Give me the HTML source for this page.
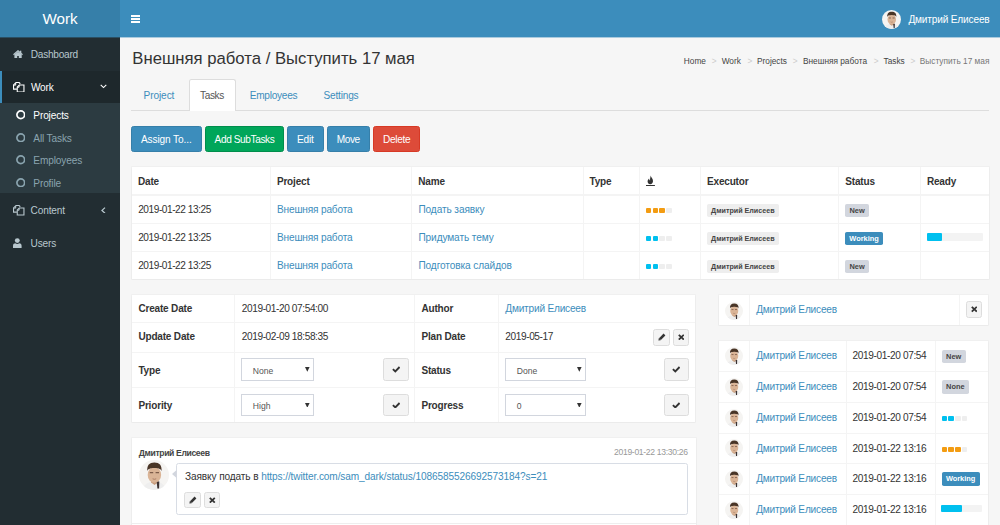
<!DOCTYPE html>
<html><head><meta charset="utf-8">
<style>
*{box-sizing:border-box;margin:0;padding:0}
html,body{width:1000px;height:525px;overflow:hidden;background:#f6f6f6;font-family:"Liberation Sans",sans-serif;color:#333}
.a{position:absolute}
.t{white-space:nowrap}
</style></head><body>
<svg width="0" height="0" style="position:absolute"><defs>
<clipPath id="avc"><circle cx="15" cy="15" r="15"/></clipPath><filter id="avb" x="-10%" y="-10%" width="120%" height="120%"><feGaussianBlur stdDeviation="0.55"/></filter>
<symbol id="av" viewBox="0 0 30 30"><g clip-path="url(#avc)">
<rect width="30" height="30" fill="#f5f4f2"/><g filter="url(#avb)">
<path d="M3 31 C4 25 8 23 11.5 22 L15.5 24.5 L19.5 22 C23 23 26 25 27 31Z" fill="#eeeeee"/>
<path d="M12 18.5 V22.5 L15.5 25 L19 22.5 V18.5Z" fill="#c79c7e"/>
<path d="M17.6 21.2 L20.3 21.6 L20.1 28.5 L18.4 28.5Z" fill="#3a3030"/>
<ellipse cx="15.4" cy="14.9" rx="6.7" ry="7.9" fill="#dab496"/>
<path d="M8.3 11 C7.9 5.2 10.4 2.7 15.4 2.6 C20.4 2.7 23 5.2 22.6 11 C21.9 9 20.4 8.1 15.4 7.9 C10.4 8.1 8.9 9 8.3 11Z" fill="#4a3427"/>
<path d="M10.8 12.6 H14.2 M16.6 12.6 H20" stroke="#7d5c4a" stroke-width="1.4"/>
<path d="M13.6 18.8 Q15.4 19.8 17.2 18.8" stroke="#a87a62" stroke-width="0.9" fill="none"/>
</g></g></symbol>
</defs></svg>
<div class="a" style="left:0.00px;top:0.00px;width:1000.00px;height:37.00px;background:#3c8dbc;"></div>
<div class="a" style="left:0.00px;top:0.00px;width:120.00px;height:37.00px;background:#367fa9;"></div>
<div class="a t" style="left:0.00px;width:120.00px;text-align:center;top:11px;font-size:15.2px;line-height:15.2px;color:#fff;">Work</div>
<div class="a" style="left:131.00px;top:15.10px;width:9.30px;height:1.70px;background:#fff;"></div>
<div class="a" style="left:131.00px;top:18.05px;width:9.30px;height:1.70px;background:#fff;"></div>
<div class="a" style="left:131.00px;top:21.00px;width:9.30px;height:1.70px;background:#fff;"></div>
<svg class="a" style="left:882px;top:9.7px" width="19" height="19" viewBox="0 0 30 30"><use href="#av"/></svg>
<div class="a t " style="left:908.40px;top:15px;font-size:10.1px;line-height:10.1px;color:#fff;letter-spacing:-0.165px;">Дмитрий Елисеев</div>
<div class="a" style="left:0.00px;top:37.00px;width:120.00px;height:488.00px;background:#222d32;"></div>
<div class="a" style="left:120.00px;top:37.00px;width:880.00px;height:1.00px;background:rgba(60,141,188,.4);"></div>
<div class="a" style="left:0.00px;top:37.00px;width:120.00px;height:1.00px;background:rgba(54,127,169,.4);"></div>
<svg class="a" style="left:13.40px;top:49.80px" width="10" height="8.4" viewBox="0 0 10 8.4"><path d="M0.5 4.7 L5 0.8 L9.5 4.7" fill="none" stroke="#b8c7ce" stroke-width="1.3"/><rect x="6.9" y="0.7" width="1.4" height="2.8" fill="#b8c7ce"/><path d="M1.4 4.6 L5 1.7 L8.7 4.6 V8.3 H5.8 V6 H4.2 V8.3 H1.4Z" fill="#b8c7ce"/></svg>
<div class="a t " style="left:30.75px;top:50px;font-size:10.1px;line-height:10.1px;color:#b8c7ce;letter-spacing:-0.24px;">Dashboard</div>
<div class="a" style="left:0.00px;top:70.50px;width:120.00px;height:32.70px;background:#1e282c;"></div>
<div class="a" style="left:0.00px;top:70.50px;width:2.25px;height:32.70px;background:#3c8dbc;"></div>
<svg class="a" style="left:13.20px;top:81.70px" width="11.5" height="10.5" viewBox="0 0 11.5 10.5"><path d="M2.9 0.55 H6.1 L7.3 1.75 M2.9 0.55 L0.55 2.9 V7.1 H3.9" fill="none" stroke="#fff" stroke-width="1.1"/><path d="M2.7 0.7 V3.1 H0.6" fill="none" stroke="#fff" stroke-width="1"/><path d="M6.3 2.95 H10.95 V9.95 H4.25 V5 Z" fill="none" stroke="#fff" stroke-width="1.1"/><path d="M6.1 3.1 V5.2 H4.3" fill="none" stroke="#fff" stroke-width="1"/></svg>
<div class="a t " style="left:31.00px;top:83px;font-size:10.1px;line-height:10.1px;color:#fff;letter-spacing:-0.22px;">Work</div>
<svg class="a" style="left:100.20px;top:84.30px" width="7" height="4.8" viewBox="0 0 7 4.8"><path d="M0.7 0.8 L3.5 3.6 L6.3 0.8" fill="none" stroke="#fff" stroke-width="1.1"/></svg>
<div class="a" style="left:0.00px;top:103.20px;width:120.00px;height:90.10px;background:#2c3b41;"></div>
<svg class="a" style="left:15.50px;top:110.30px" width="9.5" height="9.5" viewBox="0 0 9.5 9.5"><circle cx="4.75" cy="4.75" r="3.85" fill="none" stroke="#fff" stroke-width="1.7"/></svg>
<div class="a t " style="left:33.30px;top:111px;font-size:10.1px;line-height:10.1px;color:#fff;letter-spacing:-0.13px;">Projects</div>
<svg class="a" style="left:15.50px;top:132.80px" width="9.5" height="9.5" viewBox="0 0 9.5 9.5"><circle cx="4.75" cy="4.75" r="3.85" fill="none" stroke="#8aa4af" stroke-width="1.7"/></svg>
<div class="a t " style="left:33.30px;top:134px;font-size:10.1px;line-height:10.1px;color:#8aa4af;letter-spacing:-0.13px;">All Tasks</div>
<svg class="a" style="left:15.50px;top:155.30px" width="9.5" height="9.5" viewBox="0 0 9.5 9.5"><circle cx="4.75" cy="4.75" r="3.85" fill="none" stroke="#8aa4af" stroke-width="1.7"/></svg>
<div class="a t " style="left:33.30px;top:156px;font-size:10.1px;line-height:10.1px;color:#8aa4af;letter-spacing:-0.13px;">Employees</div>
<svg class="a" style="left:15.50px;top:177.80px" width="9.5" height="9.5" viewBox="0 0 9.5 9.5"><circle cx="4.75" cy="4.75" r="3.85" fill="none" stroke="#8aa4af" stroke-width="1.7"/></svg>
<div class="a t " style="left:33.30px;top:179px;font-size:10.1px;line-height:10.1px;color:#8aa4af;letter-spacing:-0.13px;">Profile</div>
<svg class="a" style="left:13.20px;top:205.00px" width="11.5" height="10.5" viewBox="0 0 11.5 10.5"><path d="M2.9 0.55 H6.1 L7.3 1.75 M2.9 0.55 L0.55 2.9 V7.1 H3.9" fill="none" stroke="#b8c7ce" stroke-width="1.1"/><path d="M2.7 0.7 V3.1 H0.6" fill="none" stroke="#b8c7ce" stroke-width="1"/><path d="M6.3 2.95 H10.95 V9.95 H4.25 V5 Z" fill="none" stroke="#b8c7ce" stroke-width="1.1"/><path d="M6.1 3.1 V5.2 H4.3" fill="none" stroke="#b8c7ce" stroke-width="1"/></svg>
<div class="a t " style="left:30.50px;top:206px;font-size:10.1px;line-height:10.1px;color:#b8c7ce;letter-spacing:-0.13px;">Content</div>
<svg class="a" style="left:100.80px;top:206.50px" width="4.8" height="6.8" viewBox="0 0 4.8 6.8"><path d="M4 0.6 L1 3.4 L4 6.2" fill="none" stroke="#b8c7ce" stroke-width="1.3"/></svg>
<svg class="a" style="left:13.10px;top:237.80px" width="8.6" height="10.2" viewBox="0 0 8.6 10.2"><circle cx="4.3" cy="2.6" r="2.45" fill="#b8c7ce"/><path d="M0 10.2 V7.8 C0 6 1.3 5.3 2.3 5.3 C2.9 5.8 3.6 6.1 4.3 6.1 C5 6.1 5.7 5.8 6.3 5.3 C7.3 5.3 8.6 6 8.6 7.8 V10.2Z" fill="#b8c7ce"/></svg>
<div class="a t " style="left:30.50px;top:239px;font-size:10.1px;line-height:10.1px;color:#b8c7ce;letter-spacing:-0.13px;">Users</div>
<div class="a t " style="left:132.30px;top:51px;font-size:16.7px;line-height:16.7px;color:#333;">Внешняя работа / Выступить 17 мая</div>
<div class="a t " style="left:683.80px;top:57px;font-size:8.3px;line-height:8.3px;color:#444;">Home</div>
<div class="a t " style="left:711.80px;top:57px;font-size:8.3px;line-height:8.3px;color:#ccc;">&gt;</div>
<div class="a t " style="left:721.70px;top:57px;font-size:8.3px;line-height:8.3px;color:#444;">Work</div>
<div class="a t " style="left:747.60px;top:57px;font-size:8.3px;line-height:8.3px;color:#ccc;">&gt;</div>
<div class="a t " style="left:757.00px;top:57px;font-size:8.3px;line-height:8.3px;color:#444;">Projects</div>
<div class="a t " style="left:792.80px;top:57px;font-size:8.3px;line-height:8.3px;color:#ccc;">&gt;</div>
<div class="a t " style="left:803.00px;top:57px;font-size:8.3px;line-height:8.3px;color:#444;">Внешняя работа</div>
<div class="a t " style="left:873.80px;top:57px;font-size:8.3px;line-height:8.3px;color:#ccc;">&gt;</div>
<div class="a t " style="left:883.50px;top:57px;font-size:8.3px;line-height:8.3px;color:#444;">Tasks</div>
<div class="a t " style="left:910.60px;top:57px;font-size:8.3px;line-height:8.3px;color:#ccc;">&gt;</div>
<div class="a t " style="left:919.80px;top:57px;font-size:8.3px;line-height:8.3px;color:#777;">Выступить 17 мая</div>
<div class="a" style="left:131.00px;top:110.20px;width:858.00px;height:1.00px;background:#ddd;"></div>
<div class="a" style="left:188.5px;top:79.3px;width:47px;height:31.9px;background:#fff;border:1px solid #ddd;border-bottom:none;border-radius:2.5px 2.5px 0 0"></div>
<div class="a t " style="left:143.60px;top:91px;font-size:10.1px;line-height:10.1px;color:#3c8dbc;letter-spacing:-0.105px;">Project</div>
<div class="a t " style="left:200.00px;top:91px;font-size:10.1px;line-height:10.1px;color:#555;letter-spacing:-0.363px;">Tasks</div>
<div class="a t " style="left:249.70px;top:91px;font-size:10.1px;line-height:10.1px;color:#3c8dbc;letter-spacing:-0.251px;">Employees</div>
<div class="a t " style="left:323.60px;top:91px;font-size:10.1px;line-height:10.1px;color:#3c8dbc;letter-spacing:-0.212px;">Settings</div>
<div class="a" style="left:131px;top:126px;width:70.6px;height:25.5px;background:#3c8dbc;border:0.75px solid #367fa9;border-radius:2.5px"></div>
<div class="a t" style="left:131.00px;width:70.60px;text-align:center;top:135px;font-size:10.1px;line-height:10.1px;color:#fff;letter-spacing:-0.119px;">Assign To...</div>
<div class="a" style="left:205px;top:126px;width:79px;height:25.5px;background:#00a65a;border:0.75px solid #008d4c;border-radius:2.5px"></div>
<div class="a t" style="left:205.00px;width:79.00px;text-align:center;top:135px;font-size:10.1px;line-height:10.1px;color:#fff;letter-spacing:-0.397px;">Add SubTasks</div>
<div class="a" style="left:287px;top:126px;width:36.80000000000001px;height:25.5px;background:#3c8dbc;border:0.75px solid #367fa9;border-radius:2.5px"></div>
<div class="a t" style="left:287.00px;width:36.80px;text-align:center;top:135px;font-size:10.1px;line-height:10.1px;color:#fff;letter-spacing:-0.176px;">Edit</div>
<div class="a" style="left:327px;top:126px;width:42.5px;height:25.5px;background:#3c8dbc;border:0.75px solid #367fa9;border-radius:2.5px"></div>
<div class="a t" style="left:327.00px;width:42.50px;text-align:center;top:135px;font-size:10.1px;line-height:10.1px;color:#fff;letter-spacing:-0.374px;">Move</div>
<div class="a" style="left:372.7px;top:126px;width:47.80000000000001px;height:25.5px;background:#dd4b39;border:0.75px solid #d73925;border-radius:2.5px"></div>
<div class="a t" style="left:372.70px;width:47.80px;text-align:center;top:135px;font-size:10.1px;line-height:10.1px;color:#fff;letter-spacing:-0.299px;">Delete</div>
<div class="a" style="left:131.50px;top:166.50px;width:857.00px;height:112.00px;background:#fff;box-shadow:0 0 0 0.75px rgba(0,0,0,.035),0 0.75px 1.5px rgba(0,0,0,.06)"></div>
<div class="a" style="left:270.02px;top:166.50px;width:0.75px;height:112.00px;background:#f4f4f4;"></div>
<div class="a" style="left:411.43px;top:166.50px;width:0.75px;height:112.00px;background:#f4f4f4;"></div>
<div class="a" style="left:582.62px;top:166.50px;width:0.75px;height:112.00px;background:#f4f4f4;"></div>
<div class="a" style="left:639.02px;top:166.50px;width:0.75px;height:112.00px;background:#f4f4f4;"></div>
<div class="a" style="left:700.12px;top:166.50px;width:0.75px;height:112.00px;background:#f4f4f4;"></div>
<div class="a" style="left:838.42px;top:166.50px;width:0.75px;height:112.00px;background:#f4f4f4;"></div>
<div class="a" style="left:920.02px;top:166.50px;width:0.75px;height:112.00px;background:#f4f4f4;"></div>
<div class="a" style="left:131.50px;top:194.20px;width:857.00px;height:1.50px;background:#f4f4f4;"></div>
<div class="a" style="left:131.50px;top:222.62px;width:857.00px;height:0.75px;background:#f4f4f4;"></div>
<div class="a" style="left:131.50px;top:250.62px;width:857.00px;height:0.75px;background:#f4f4f4;"></div>
<div class="a t " style="left:138.00px;top:177px;font-size:10.0px;line-height:10.0px;color:#333;font-weight:700;letter-spacing:-0.17px;">Date</div>
<div class="a t " style="left:276.90px;top:177px;font-size:10.0px;line-height:10.0px;color:#333;font-weight:700;letter-spacing:-0.17px;">Project</div>
<div class="a t " style="left:418.30px;top:177px;font-size:10.0px;line-height:10.0px;color:#333;font-weight:700;letter-spacing:-0.17px;">Name</div>
<div class="a t " style="left:589.50px;top:177px;font-size:10.0px;line-height:10.0px;color:#333;font-weight:700;letter-spacing:-0.17px;">Type</div>
<div class="a t " style="left:707.00px;top:177px;font-size:10.0px;line-height:10.0px;color:#333;font-weight:700;letter-spacing:-0.17px;">Executor</div>
<div class="a t " style="left:845.30px;top:177px;font-size:10.0px;line-height:10.0px;color:#333;font-weight:700;letter-spacing:-0.17px;">Status</div>
<div class="a t " style="left:926.90px;top:177px;font-size:10.0px;line-height:10.0px;color:#333;font-weight:700;letter-spacing:-0.17px;">Ready</div>
<svg class="a" style="left:646.00px;top:175.00px" width="9" height="12" viewBox="0 0 9 12"><path d="M4.6 0.4 C4.9 2.2 7 3.3 7 6 C7 7.9 5.9 9.2 4.3 9.2 C2.7 9.2 1.6 8 1.6 6.5 C1.6 5 2.5 4.1 3.1 3.5 C3.1 4.5 3.5 5.2 4.1 5.4 C3.8 3.7 4.6 1.9 4.6 0.4Z" fill="#333"/><rect x="0" y="10" width="8.9" height="1" fill="#333"/></svg>
<div class="a t " style="left:138.20px;top:205px;font-size:10.1px;line-height:10.1px;color:#333;letter-spacing:-0.434px;">2019-01-22 13:25</div>
<div class="a t " style="left:277.00px;top:205px;font-size:10.1px;line-height:10.1px;color:#3c8dbc;letter-spacing:-0.171px;">Внешняя работа</div>
<div class="a t " style="left:418.40px;top:205px;font-size:10.1px;line-height:10.1px;color:#3c8dbc;letter-spacing:-0.09px;">Подать заявку</div>
<div class="a" style="left:645.80px;top:208.10px;width:5.40px;height:5.00px;background:#f39c12;border-radius:1px"></div>
<div class="a" style="left:652.60px;top:208.10px;width:5.40px;height:5.00px;background:#f39c12;border-radius:1px"></div>
<div class="a" style="left:659.40px;top:208.10px;width:5.40px;height:5.00px;background:#f39c12;border-radius:1px"></div>
<div class="a" style="left:666.20px;top:208.10px;width:5.40px;height:5.00px;background:#eee;border-radius:1px"></div>
<div class="a t" style="left:707px;top:203.90px;height:13.4px;line-height:15.0px;padding:0 4.1px;background:#eee;color:#444;font-size:7.17px;font-weight:700;border-radius:1.8px">Дмитрий Елисеев</div>
<div class="a t" style="left:845px;top:203.90px;height:13.4px;line-height:13.4px;padding:0 4.5px;background:#d2d6de;color:#444;font-size:7.4px;font-weight:700;border-radius:1.8px">New</div>
<div class="a t " style="left:138.20px;top:233px;font-size:10.1px;line-height:10.1px;color:#333;letter-spacing:-0.434px;">2019-01-22 13:25</div>
<div class="a t " style="left:277.00px;top:233px;font-size:10.1px;line-height:10.1px;color:#3c8dbc;letter-spacing:-0.171px;">Внешняя работа</div>
<div class="a t " style="left:418.40px;top:233px;font-size:10.1px;line-height:10.1px;color:#3c8dbc;letter-spacing:-0.09px;">Придумать тему</div>
<div class="a" style="left:645.80px;top:236.10px;width:5.40px;height:5.00px;background:#00c0ef;border-radius:1px"></div>
<div class="a" style="left:652.60px;top:236.10px;width:5.40px;height:5.00px;background:#00c0ef;border-radius:1px"></div>
<div class="a" style="left:659.40px;top:236.10px;width:5.40px;height:5.00px;background:#eee;border-radius:1px"></div>
<div class="a" style="left:666.20px;top:236.10px;width:5.40px;height:5.00px;background:#eee;border-radius:1px"></div>
<div class="a t" style="left:707px;top:231.90px;height:13.4px;line-height:15.0px;padding:0 4.1px;background:#eee;color:#444;font-size:7.17px;font-weight:700;border-radius:1.8px">Дмитрий Елисеев</div>
<div class="a t" style="left:845px;top:231.90px;height:13.4px;line-height:13.4px;padding:0 4.3px;background:#3c8dbc;color:#fff;font-size:7.4px;font-weight:700;border-radius:1.8px">Working</div>
<div class="a t " style="left:138.20px;top:261px;font-size:10.1px;line-height:10.1px;color:#333;letter-spacing:-0.434px;">2019-01-22 13:25</div>
<div class="a t " style="left:277.00px;top:261px;font-size:10.1px;line-height:10.1px;color:#3c8dbc;letter-spacing:-0.171px;">Внешняя работа</div>
<div class="a t " style="left:418.40px;top:261px;font-size:10.1px;line-height:10.1px;color:#3c8dbc;letter-spacing:-0.09px;">Подготовка слайдов</div>
<div class="a" style="left:645.80px;top:264.10px;width:5.40px;height:5.00px;background:#00c0ef;border-radius:1px"></div>
<div class="a" style="left:652.60px;top:264.10px;width:5.40px;height:5.00px;background:#00c0ef;border-radius:1px"></div>
<div class="a" style="left:659.40px;top:264.10px;width:5.40px;height:5.00px;background:#eee;border-radius:1px"></div>
<div class="a" style="left:666.20px;top:264.10px;width:5.40px;height:5.00px;background:#eee;border-radius:1px"></div>
<div class="a t" style="left:707px;top:259.90px;height:13.4px;line-height:15.0px;padding:0 4.1px;background:#eee;color:#444;font-size:7.17px;font-weight:700;border-radius:1.8px">Дмитрий Елисеев</div>
<div class="a t" style="left:845px;top:259.90px;height:13.4px;line-height:13.4px;padding:0 4.5px;background:#d2d6de;color:#444;font-size:7.4px;font-weight:700;border-radius:1.8px">New</div>
<div class="a" style="left:927.00px;top:233.00px;width:56.00px;height:7.60px;background:#f3f3f3;border-radius:1px"></div>
<div class="a" style="left:927.00px;top:233.00px;width:14.70px;height:7.60px;background:#00c0ef;border-radius:1px"></div>
<div class="a" style="left:131.70px;top:295.00px;width:563.30px;height:127.00px;background:#fff;box-shadow:0 0 0 0.75px rgba(0,0,0,.035),0 0.75px 1.5px rgba(0,0,0,.06)"></div>
<div class="a" style="left:234.22px;top:295.00px;width:0.75px;height:127.00px;background:#f4f4f4;"></div>
<div class="a" style="left:414.12px;top:295.00px;width:0.75px;height:127.00px;background:#f4f4f4;"></div>
<div class="a" style="left:498.02px;top:295.00px;width:0.75px;height:127.00px;background:#f4f4f4;"></div>
<div class="a" style="left:131.70px;top:321.93px;width:563.30px;height:0.75px;background:#f4f4f4;"></div>
<div class="a" style="left:131.70px;top:351.62px;width:563.30px;height:0.75px;background:#f4f4f4;"></div>
<div class="a" style="left:131.70px;top:386.93px;width:563.30px;height:0.75px;background:#f4f4f4;"></div>
<div class="a t " style="left:138.40px;top:304px;font-size:10.0px;line-height:10.0px;color:#333;font-weight:700;letter-spacing:-0.17px;">Create Date</div>
<div class="a t " style="left:138.40px;top:332px;font-size:10.0px;line-height:10.0px;color:#333;font-weight:700;letter-spacing:-0.17px;">Update Date</div>
<div class="a t " style="left:138.40px;top:366px;font-size:10.0px;line-height:10.0px;color:#333;font-weight:700;letter-spacing:-0.17px;">Type</div>
<div class="a t " style="left:138.40px;top:401px;font-size:10.0px;line-height:10.0px;color:#333;font-weight:700;letter-spacing:-0.17px;">Priority</div>
<div class="a t " style="left:421.40px;top:304px;font-size:10.0px;line-height:10.0px;color:#333;font-weight:700;letter-spacing:-0.17px;">Author</div>
<div class="a t " style="left:421.40px;top:332px;font-size:10.0px;line-height:10.0px;color:#333;font-weight:700;letter-spacing:-0.17px;">Plan Date</div>
<div class="a t " style="left:421.40px;top:366px;font-size:10.0px;line-height:10.0px;color:#333;font-weight:700;letter-spacing:-0.17px;">Status</div>
<div class="a t " style="left:421.40px;top:401px;font-size:10.0px;line-height:10.0px;color:#333;font-weight:700;letter-spacing:-0.17px;">Progress</div>
<div class="a t " style="left:241.80px;top:304px;font-size:10.1px;line-height:10.1px;color:#333;letter-spacing:-0.399px;">2019-01-20 07:54:00</div>
<div class="a t " style="left:241.80px;top:332px;font-size:10.1px;line-height:10.1px;color:#333;letter-spacing:-0.399px;">2019-02-09 18:58:35</div>
<div class="a t " style="left:505.30px;top:304px;font-size:10.1px;line-height:10.1px;color:#3c8dbc;letter-spacing:-0.199px;">Дмитрий Елисеев</div>
<div class="a t " style="left:505.30px;top:332px;font-size:10.1px;line-height:10.1px;color:#333;letter-spacing:-0.396px;">2019-05-17</div>
<div class="a" style="left:241.4px;top:358.4px;width:72.20px;height:22.40px;background:#fff;border:0.75px solid #d2d6de"></div>
<div class="a t " style="left:252.80px;top:367px;font-size:8.6px;line-height:8.6px;color:#555;">None</div>
<svg class="a" style="left:305.00px;top:367.00px" width="4.6" height="4.8" viewBox="0 0 4.6 4.8"><path d="M0 0 H4.6 L2.3 4.8Z" fill="#333"/></svg>
<div class="a" style="left:241.4px;top:394px;width:72.20px;height:22.20px;background:#fff;border:0.75px solid #d2d6de"></div>
<div class="a t " style="left:252.80px;top:402px;font-size:8.6px;line-height:8.6px;color:#555;">High</div>
<svg class="a" style="left:305.00px;top:402.60px" width="4.6" height="4.8" viewBox="0 0 4.6 4.8"><path d="M0 0 H4.6 L2.3 4.8Z" fill="#333"/></svg>
<div class="a" style="left:505.4px;top:358.4px;width:80.40px;height:22.40px;background:#fff;border:0.75px solid #d2d6de"></div>
<div class="a t " style="left:516.80px;top:367px;font-size:8.6px;line-height:8.6px;color:#555;">Done</div>
<svg class="a" style="left:577.20px;top:367.00px" width="4.6" height="4.8" viewBox="0 0 4.6 4.8"><path d="M0 0 H4.6 L2.3 4.8Z" fill="#333"/></svg>
<div class="a" style="left:505.4px;top:394px;width:80.40px;height:22.20px;background:#fff;border:0.75px solid #d2d6de"></div>
<div class="a t " style="left:516.80px;top:402px;font-size:8.6px;line-height:8.6px;color:#555;">0</div>
<svg class="a" style="left:577.20px;top:402.60px" width="4.6" height="4.8" viewBox="0 0 4.6 4.8"><path d="M0 0 H4.6 L2.3 4.8Z" fill="#333"/></svg>
<div class="a" style="left:383.2px;top:358.4px;width:25.40px;height:22.40px;background:#f4f4f4;border:0.75px solid #ddd;border-radius:2.5px"></div>
<svg class="a" style="left:391.70px;top:366.30px" width="8.4" height="6.6" viewBox="0 0 8.4 6.6"><path d="M0.9 3.1 L3.3 5.4 L7.6 1" fill="none" stroke="#333" stroke-width="1.9"/></svg>
<div class="a" style="left:383.2px;top:394px;width:25.40px;height:22.40px;background:#f4f4f4;border:0.75px solid #ddd;border-radius:2.5px"></div>
<svg class="a" style="left:391.70px;top:401.90px" width="8.4" height="6.6" viewBox="0 0 8.4 6.6"><path d="M0.9 3.1 L3.3 5.4 L7.6 1" fill="none" stroke="#333" stroke-width="1.9"/></svg>
<div class="a" style="left:663.5px;top:358.4px;width:25.10px;height:22.40px;background:#f4f4f4;border:0.75px solid #ddd;border-radius:2.5px"></div>
<svg class="a" style="left:671.85px;top:366.30px" width="8.4" height="6.6" viewBox="0 0 8.4 6.6"><path d="M0.9 3.1 L3.3 5.4 L7.6 1" fill="none" stroke="#333" stroke-width="1.9"/></svg>
<div class="a" style="left:663.5px;top:394px;width:25.10px;height:22.40px;background:#f4f4f4;border:0.75px solid #ddd;border-radius:2.5px"></div>
<svg class="a" style="left:671.85px;top:401.90px" width="8.4" height="6.6" viewBox="0 0 8.4 6.6"><path d="M0.9 3.1 L3.3 5.4 L7.6 1" fill="none" stroke="#333" stroke-width="1.9"/></svg>
<div class="a" style="left:653.2px;top:328.6px;width:16.60px;height:17.20px;background:#f4f4f4;border:0.75px solid #ddd;border-radius:2.5px"></div>
<svg class="a" style="left:657.50px;top:333.20px" width="8" height="8" viewBox="0 0 8 8"><path d="M5.6 0.6 L7.4 2.4 L2.6 7.2 L0.4 7.6 L0.8 5.4 Z" fill="#333"/><path d="M1.3 5.6 L2.4 6.7" stroke="#f4f4f4" stroke-width="0.5"/></svg>
<div class="a" style="left:673.2px;top:328.8px;width:15.40px;height:17.00px;background:#f4f4f4;border:0.75px solid #ddd;border-radius:2.5px"></div>
<svg class="a" style="left:677.60px;top:334.10px" width="6.6" height="6.4" viewBox="0 0 6.6 6.4"><path d="M0.8 0.8 L5.8 5.6 M5.8 0.8 L0.8 5.6" fill="none" stroke="#333" stroke-width="1.8"/></svg>
<div class="a" style="left:718.70px;top:294.60px;width:269.70px;height:30.40px;background:#fff;box-shadow:0 0 0 0.75px rgba(0,0,0,.035),0 0.75px 1.5px rgba(0,0,0,.06)"></div>
<div class="a" style="left:748.92px;top:294.60px;width:0.75px;height:30.40px;background:#f4f4f4;"></div>
<div class="a" style="left:959.12px;top:294.60px;width:0.75px;height:30.40px;background:#f4f4f4;"></div>
<svg class="a" style="left:724.90px;top:301.50px" width="18" height="18" viewBox="0 0 30 30"><use href="#av"/></svg>
<div class="a t " style="left:756.20px;top:305px;font-size:10.1px;line-height:10.1px;color:#3c8dbc;letter-spacing:-0.195px;">Дмитрий Елисеев</div>
<div class="a" style="left:965.8px;top:301.3px;width:16.00px;height:16.70px;background:#f4f4f4;border:0.75px solid #ddd;border-radius:2.5px"></div>
<svg class="a" style="left:970.50px;top:306.45px" width="6.6" height="6.4" viewBox="0 0 6.6 6.4"><path d="M0.8 0.8 L5.8 5.6 M5.8 0.8 L0.8 5.6" fill="none" stroke="#333" stroke-width="1.8"/></svg>
<div class="a" style="left:718.70px;top:340.80px;width:269.70px;height:184.70px;background:#fff;box-shadow:0 0 0 0.75px rgba(0,0,0,.035),0 0.75px 1.5px rgba(0,0,0,.06)"></div>
<div class="a" style="left:749.12px;top:340.80px;width:0.75px;height:184.20px;background:#f4f4f4;"></div>
<div class="a" style="left:845.83px;top:340.80px;width:0.75px;height:184.20px;background:#f4f4f4;"></div>
<div class="a" style="left:935.33px;top:340.80px;width:0.75px;height:184.20px;background:#f4f4f4;"></div>
<svg class="a" style="left:724.90px;top:347.16px" width="18" height="18" viewBox="0 0 30 30"><use href="#av"/></svg>
<div class="a t " style="left:756.20px;top:351px;font-size:10.1px;line-height:10.1px;color:#3c8dbc;letter-spacing:-0.195px;">Дмитрий Елисеев</div>
<div class="a t " style="left:852.60px;top:351px;font-size:10.1px;line-height:10.1px;color:#333;letter-spacing:-0.375px;">2019-01-20 07:54</div>
<div class="a t" style="left:941.6px;top:349.56px;height:13.4px;line-height:13.4px;padding:0 4.5px;background:#d2d6de;color:#444;font-size:7.4px;font-weight:700;border-radius:1.8px">New</div>
<div class="a" style="left:718.70px;top:371.14px;width:269.70px;height:0.75px;background:#f4f4f4;"></div>
<svg class="a" style="left:724.90px;top:377.88px" width="18" height="18" viewBox="0 0 30 30"><use href="#av"/></svg>
<div class="a t " style="left:756.20px;top:382px;font-size:10.1px;line-height:10.1px;color:#3c8dbc;letter-spacing:-0.195px;">Дмитрий Елисеев</div>
<div class="a t " style="left:852.60px;top:382px;font-size:10.1px;line-height:10.1px;color:#333;letter-spacing:-0.375px;">2019-01-20 07:54</div>
<div class="a t" style="left:941.6px;top:380.28px;height:13.4px;line-height:13.4px;padding:0 4.5px;background:#d2d6de;color:#444;font-size:7.4px;font-weight:700;border-radius:1.8px">None</div>
<div class="a" style="left:718.70px;top:401.87px;width:269.70px;height:0.75px;background:#f4f4f4;"></div>
<svg class="a" style="left:724.90px;top:408.60px" width="18" height="18" viewBox="0 0 30 30"><use href="#av"/></svg>
<div class="a t " style="left:756.20px;top:413px;font-size:10.1px;line-height:10.1px;color:#3c8dbc;letter-spacing:-0.195px;">Дмитрий Елисеев</div>
<div class="a t " style="left:852.60px;top:413px;font-size:10.1px;line-height:10.1px;color:#333;letter-spacing:-0.375px;">2019-01-20 07:54</div>
<div class="a" style="left:941.60px;top:416.40px;width:5.40px;height:5.00px;background:#00c0ef;border-radius:1px"></div>
<div class="a" style="left:948.40px;top:416.40px;width:5.40px;height:5.00px;background:#00c0ef;border-radius:1px"></div>
<div class="a" style="left:955.20px;top:416.40px;width:5.40px;height:5.00px;background:#eee;border-radius:1px"></div>
<div class="a" style="left:962.00px;top:416.40px;width:5.40px;height:5.00px;background:#eee;border-radius:1px"></div>
<div class="a" style="left:718.70px;top:432.59px;width:269.70px;height:0.75px;background:#f4f4f4;"></div>
<svg class="a" style="left:724.90px;top:439.32px" width="18" height="18" viewBox="0 0 30 30"><use href="#av"/></svg>
<div class="a t " style="left:756.20px;top:444px;font-size:10.1px;line-height:10.1px;color:#3c8dbc;letter-spacing:-0.195px;">Дмитрий Елисеев</div>
<div class="a t " style="left:852.60px;top:444px;font-size:10.1px;line-height:10.1px;color:#333;letter-spacing:-0.375px;">2019-01-22 13:16</div>
<div class="a" style="left:941.60px;top:447.12px;width:5.40px;height:5.00px;background:#f39c12;border-radius:1px"></div>
<div class="a" style="left:948.40px;top:447.12px;width:5.40px;height:5.00px;background:#f39c12;border-radius:1px"></div>
<div class="a" style="left:955.20px;top:447.12px;width:5.40px;height:5.00px;background:#f39c12;border-radius:1px"></div>
<div class="a" style="left:962.00px;top:447.12px;width:5.40px;height:5.00px;background:#eee;border-radius:1px"></div>
<div class="a" style="left:718.70px;top:463.31px;width:269.70px;height:0.75px;background:#f4f4f4;"></div>
<svg class="a" style="left:724.90px;top:470.04px" width="18" height="18" viewBox="0 0 30 30"><use href="#av"/></svg>
<div class="a t " style="left:756.20px;top:474px;font-size:10.1px;line-height:10.1px;color:#3c8dbc;letter-spacing:-0.195px;">Дмитрий Елисеев</div>
<div class="a t " style="left:852.60px;top:474px;font-size:10.1px;line-height:10.1px;color:#333;letter-spacing:-0.375px;">2019-01-22 13:16</div>
<div class="a t" style="left:941.6px;top:472.44px;height:13.4px;line-height:13.4px;padding:0 4.3px;background:#3c8dbc;color:#fff;font-size:7.4px;font-weight:700;border-radius:1.8px">Working</div>
<div class="a" style="left:718.70px;top:494.02px;width:269.70px;height:0.75px;background:#f4f4f4;"></div>
<svg class="a" style="left:724.90px;top:500.76px" width="18" height="18" viewBox="0 0 30 30"><use href="#av"/></svg>
<div class="a t " style="left:756.20px;top:505px;font-size:10.1px;line-height:10.1px;color:#3c8dbc;letter-spacing:-0.195px;">Дмитрий Елисеев</div>
<div class="a t " style="left:852.60px;top:505px;font-size:10.1px;line-height:10.1px;color:#333;letter-spacing:-0.375px;">2019-01-22 13:16</div>
<div class="a" style="left:941.40px;top:504.60px;width:40.60px;height:7.30px;background:#f3f3f3;border-radius:1px"></div>
<div class="a" style="left:941.40px;top:504.60px;width:20.30px;height:7.30px;background:#00c0ef;border-radius:1px"></div>
<div class="a" style="left:131.50px;top:437.60px;width:564.10px;height:88.40px;background:#fff;box-shadow:0 0 0 0.75px rgba(0,0,0,.035),0 0.75px 1.5px rgba(0,0,0,.06)"></div>
<div class="a t " style="left:138.70px;top:449px;font-size:8.6px;line-height:8.6px;color:#444;font-weight:700;letter-spacing:-0.355px;">Дмитрий Елисеев</div>
<div class="a t" style="right:312.30px;top:448px;font-size:8.6px;line-height:8.6px;color:#999;letter-spacing:-0.324px;">2019-01-22 13:30:26</div>
<svg class="a" style="left:138.80px;top:460.20px" width="30" height="30" viewBox="0 0 30 30"><use href="#av"/></svg>
<div class="a" style="left:176.4px;top:462.5px;width:511.3px;height:52.2px;background:#fff;border:0.75px solid #d8dde5;border-radius:2.5px"></div>
<svg class="a" style="left:172.20px;top:470.40px" width="4.6" height="8" viewBox="0 0 4.6 8"><path d="M4.6 0 L0 4 L4.6 8Z" fill="#d2d6de"/></svg>
<div class="a t " style="left:185.00px;top:472px;font-size:10.1px;line-height:10.1px;color:#333;letter-spacing:-0.109px;">Заявку подать в <span style="color:#3c8dbc">https://twitter.com/sam_dark/status/1086585526692573184?s=21</span></div>
<div class="a" style="left:184.4px;top:491.7px;width:16.20px;height:16.50px;background:#f4f4f4;border:0.75px solid #ddd;border-radius:2.5px"></div>
<svg class="a" style="left:188.50px;top:495.95px" width="8" height="8" viewBox="0 0 8 8"><path d="M5.6 0.6 L7.4 2.4 L2.6 7.2 L0.4 7.6 L0.8 5.4 Z" fill="#333"/><path d="M1.3 5.6 L2.4 6.7" stroke="#f4f4f4" stroke-width="0.5"/></svg>
<div class="a" style="left:204.4px;top:491.9px;width:15.80px;height:16.30px;background:#f4f4f4;border:0.75px solid #ddd;border-radius:2.5px"></div>
<svg class="a" style="left:209.00px;top:496.85px" width="6.6" height="6.4" viewBox="0 0 6.6 6.4"><path d="M0.8 0.8 L5.8 5.6 M5.8 0.8 L0.8 5.6" fill="none" stroke="#333" stroke-width="1.8"/></svg>
<div class="a" style="left:131.50px;top:523.00px;width:564.10px;height:0.75px;background:#eee;"></div>
</body></html>
